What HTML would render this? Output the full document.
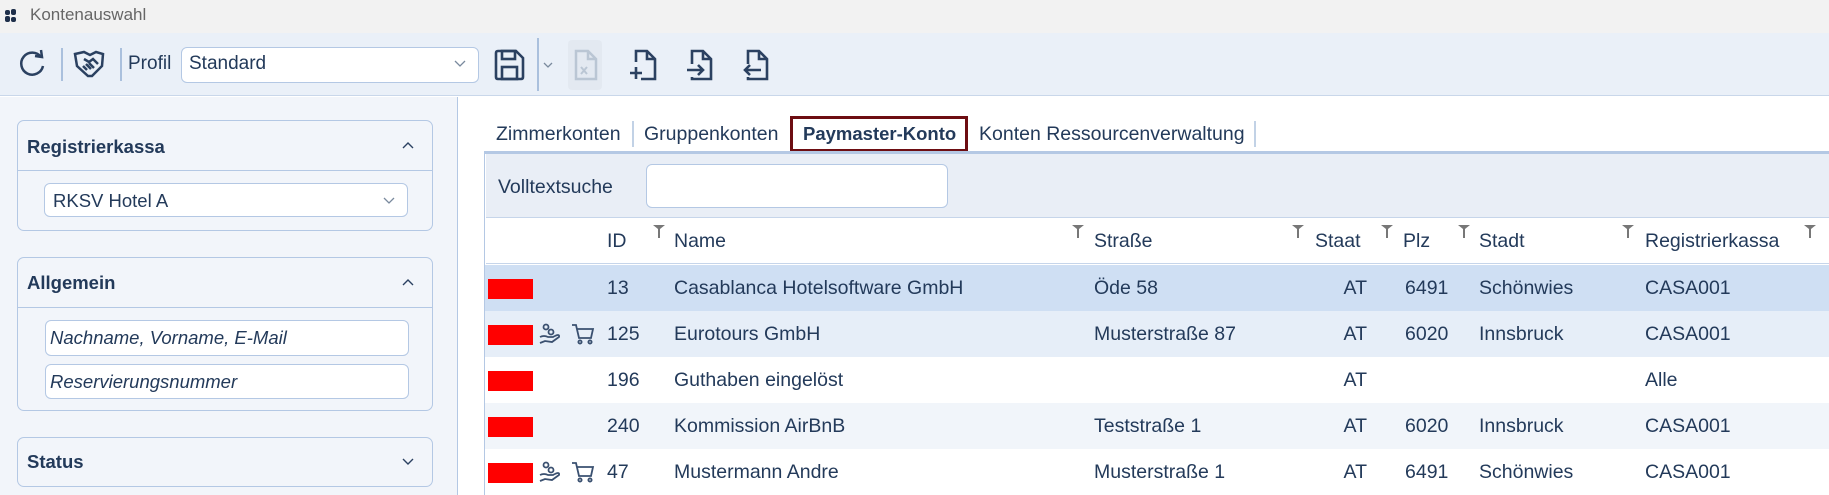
<!DOCTYPE html>
<html><head><meta charset="utf-8"><style>
*{box-sizing:border-box;margin:0;padding:0}
body{width:1829px;height:495px;overflow:hidden;background:#fff;font-family:"Liberation Sans",sans-serif;color:#233a5a;font-size:19.5px;position:relative}
.a{position:absolute;white-space:nowrap}
.card{position:absolute;left:17px;width:416px;border:1.5px solid #b4c8e4;border-radius:7px;background:#f2f5fa}
.inp{position:absolute;background:#fff;border:1.5px solid #b4c8e4;border-radius:6px}
.hd{font-weight:bold;font-size:18.5px}
.row{position:absolute;left:485px;width:1344px;height:46px}
.row .a{top:12px}
.red{position:absolute;left:3px;top:14px;width:45px;height:20px;background:#f00}
.flt{position:absolute;top:6px;width:12px;height:14px}
</style></head><body>
<div class="a" style="left:0;top:0;width:1829px;height:33px;background:#f2f2f2"></div>
<svg class="a" style="left:5px;top:9px" width="12" height="14"><rect x="0" y="1" width="5" height="5" rx="2" fill="#1e2f4a"/><rect x="6" y="0" width="5" height="6" rx="2" fill="#1e2f4a"/><rect x="0" y="7" width="5" height="6" rx="2" fill="#1e2f4a"/><rect x="6" y="8" width="5" height="5" rx="2" fill="#1e2f4a"/></svg>
<div class="a" style="left:30px;top:5px;font-size:17px;color:#666">Kontenauswahl</div>
<div class="a" style="left:0;top:33px;width:1829px;height:63px;background:#eaf0f8;border-bottom:1.5px solid #c9d7ea"></div>
<svg class="a" style="left:16px;top:48px" width="32" height="32" fill="none" stroke="#2b4161" stroke-width="2.5"><path d="M25 9 A11 11 0 1 0 27 18"/><path d="M19 8 L26 9 L25 2"/></svg>
<div class="a" style="left:61px;top:48px;width:1.5px;height:33px;background:#aac0dd"></div>
<svg class="a" style="left:72px;top:48px" width="34" height="32" fill="none" stroke="#2b4161" stroke-width="2.5"><path d="M3 6 L12 4 L18 7 L24 4 L31 6 L30 18 L20 28 L16 28 L5 18 Z"/><path d="M12 11 L17 14 L21 11 L26 16"/><path d="M11 18 L15 22 M14 16 L19 21 M17 15 L22 20"/></svg>
<div class="a" style="left:120px;top:48px;width:1.5px;height:33px;background:#aac0dd"></div>
<div class="a" style="left:128px;top:53px;font-size:19px">Profil</div>
<div class="inp" style="left:181px;top:47px;width:298px;height:36px"></div>
<div class="a" style="left:189px;top:53px;font-size:19px">Standard</div>
<svg class="a" style="left:454px;top:60px" width="12" height="8" fill="none" stroke="#7a8a9e" stroke-width="1.3"><path d="M1 1 L6 6 L11 1"/></svg>
<svg class="a" style="left:492px;top:48px" width="34" height="34" fill="none" stroke="#2b4161" stroke-width="2.6"><path d="M4 5 Q4 3 6 3 L24 3 L31 10 L31 29 Q31 31 29 31 L6 31 Q4 31 4 29 Z"/><rect x="10" y="3" width="13" height="8"/><rect x="10" y="19" width="15" height="12"/></svg>
<div class="a" style="left:537px;top:38px;width:1.5px;height:53px;background:#aac0dd"></div>
<svg class="a" style="left:543px;top:62px" width="10" height="7" fill="none" stroke="#7a8a9e" stroke-width="1.3"><path d="M1 1 L5 5 L9 1"/></svg>
<div class="a" style="left:568px;top:40px;width:34px;height:50px;background:#e3e9f1;border-radius:4px"></div>
<svg class="a" style="left:572px;top:48px" width="28" height="34" fill="none" stroke="#bac6d4" stroke-width="2.5"><path d="M4 3 L16 3 L24 11 L24 31 L4 31 Z M16 3 L16 11 L24 11"/><path d="M9 19 L15 26 M15 19 L9 26" stroke-width="2"/></svg>
<svg class="a" style="left:630px;top:48px" width="30" height="34" fill="none" stroke="#2b4161" stroke-width="2.6"><path d="M6 14 L6 3 L17 3 L25 11 L25 31 L11 31 M17 3 L17 11 L25 11"/><path d="M6 19 L6 31 M0 25 L12 25"/></svg>
<svg class="a" style="left:686px;top:48px" width="30" height="34" fill="none" stroke="#2b4161" stroke-width="2.6"><path d="M6 16 L6 3 L17 3 L25 11 L25 31 L6 31 L6 29 M17 3 L17 11 L25 11"/><path d="M1 22 L17 22 M12 17 L17 22 L12 27"/></svg>
<svg class="a" style="left:742px;top:48px" width="30" height="34" fill="none" stroke="#2b4161" stroke-width="2.6"><path d="M6 16 L6 3 L17 3 L25 11 L25 31 L6 31 L6 29 M17 3 L17 11 L25 11"/><path d="M3 22 L19 22 M8 17 L3 22 L8 27"/></svg>
<div class="a" style="left:0;top:97px;width:458px;height:398px;background:#f2f5fa;border-right:1.5px solid #b4c8e4"></div>
<div class="card" style="top:120px;height:111px"><div style="height:50px;border-bottom:1.5px solid #b4c8e4"></div></div>
<div class="a hd" style="left:27px;top:136px">Registrierkassa</div>
<svg class="a" style="left:402px;top:141px" width="12" height="8" fill="none" stroke="#2b4161" stroke-width="1.4"><path d="M1 7 L6 2 L11 7"/></svg>
<div class="inp" style="left:44px;top:183px;width:364px;height:34px"></div>
<div class="a" style="left:53px;top:190px;font-size:18.5px">RKSV Hotel A</div>
<svg class="a" style="left:383px;top:197px" width="12" height="8" fill="none" stroke="#7a8a9e" stroke-width="1.3"><path d="M1 1 L6 6 L11 1"/></svg>
<div class="card" style="top:257px;height:154px"><div style="height:50px;border-bottom:1.5px solid #b4c8e4"></div></div>
<div class="a hd" style="left:27px;top:272px">Allgemein</div>
<svg class="a" style="left:402px;top:278px" width="12" height="8" fill="none" stroke="#2b4161" stroke-width="1.4"><path d="M1 7 L6 2 L11 7"/></svg>
<div class="inp" style="left:45px;top:320px;width:364px;height:36px"></div>
<div class="a" style="left:50px;top:327px;font-size:18.5px;font-style:italic">Nachname, Vorname, E-Mail</div>
<div class="inp" style="left:45px;top:364px;width:364px;height:35px"></div>
<div class="a" style="left:50px;top:371px;font-size:18.5px;font-style:italic">Reservierungsnummer</div>
<div class="card" style="top:437px;height:50px"></div>
<div class="a hd" style="left:27px;top:451px">Status</div>
<svg class="a" style="left:402px;top:458px" width="12" height="8" fill="none" stroke="#2b4161" stroke-width="1.4"><path d="M1 1 L6 6 L11 1"/></svg>
<div class="a" style="left:496px;top:123px">Zimmerkonten</div>
<div class="a" style="left:632px;top:121px;width:1.5px;height:26px;background:#c2d2e6"></div>
<div class="a" style="left:644px;top:123px">Gruppenkonten</div>
<div class="a" style="left:790px;top:116px;width:178px;height:36px;border:3px solid #6d0d12"></div>
<div class="a" style="left:803px;top:123px;font-weight:bold;font-size:18.5px">Paymaster-Konto</div>
<div class="a" style="left:979px;top:123px">Konten Ressourcenverwaltung</div>
<div class="a" style="left:1254px;top:121px;width:1.5px;height:26px;background:#c2d2e6"></div>
<div class="a" style="left:484px;top:151px;width:1345px;height:344px;border-left:1.5px solid #b4c8e4;border-top:3px solid #b4c8e4"></div>
<div class="a" style="left:486px;top:154px;width:1343px;height:64px;background:#e9eef6;border-bottom:1.5px solid #c6d5ea"></div>
<div class="a" style="left:498px;top:176px">Volltextsuche</div>
<div class="inp" style="left:646px;top:164px;width:302px;height:44px"></div>
<div class="a" style="left:486px;top:219px;width:1343px;height:45px;background:#fff;border-bottom:1.5px solid #c6d5ea"></div>
<div class="a" style="left:607px;top:230px">ID</div>
<div class="a" style="left:674px;top:230px">Name</div>
<div class="a" style="left:1094px;top:230px">Straße</div>
<div class="a" style="left:1315px;top:230px">Staat</div>
<div class="a" style="left:1403px;top:230px">Plz</div>
<div class="a" style="left:1479px;top:230px">Stadt</div>
<div class="a" style="left:1645px;top:230px">Registrierkassa</div>
<svg width="0" height="0" style="position:absolute"><defs><symbol id="f" viewBox="0 0 12 14"><path d="M0 0 H12 L7 4 V13 H5 V4 Z" fill="#777"/></symbol></defs></svg>
<svg class="a flt" style="left:653px;top:225px"><use href="#f"/></svg>
<svg class="a flt" style="left:1072px;top:225px"><use href="#f"/></svg>
<svg class="a flt" style="left:1292px;top:225px"><use href="#f"/></svg>
<svg class="a flt" style="left:1381px;top:225px"><use href="#f"/></svg>
<svg class="a flt" style="left:1458px;top:225px"><use href="#f"/></svg>
<svg class="a flt" style="left:1622px;top:225px"><use href="#f"/></svg>
<svg class="a flt" style="left:1804px;top:225px"><use href="#f"/></svg>
<div class="row" style="top:265px;background:#cfdff3"><div class="red"></div><div class="a" style="left:122px">13</div><div class="a" style="left:189px">Casablanca Hotelsoftware GmbH</div><div class="a" style="left:609px">Öde 58</div><div class="a" style="left:852px;width:30px;text-align:right">AT</div><div class="a" style="left:920px">6491</div><div class="a" style="left:994px">Schönwies</div><div class="a" style="left:1160px">CASA001</div></div>
<div class="row" style="top:311px;background:#e6eef8"><div class="red"></div><svg class="a" style="left:53px;top:12px" width="24" height="22" fill="none" stroke="#3a5070" stroke-width="1.8"><circle cx="8" cy="4" r="2.5"/><circle cx="13" cy="9" r="2.5"/><path d="M2 14 Q6 12 10 14 L15 14 Q22 10 21 14 L14 19 L7 18 L2 20"/></svg><svg class="a" style="left:86px;top:12px" width="24" height="22" fill="none" stroke="#3a5070" stroke-width="1.8"><path d="M1 2 L5 2 L8 15 L20 15 L22 6 L6 6"/><circle cx="9" cy="19" r="1.6"/><circle cx="19" cy="19" r="1.6"/></svg><div class="a" style="left:122px">125</div><div class="a" style="left:189px">Eurotours GmbH</div><div class="a" style="left:609px">Musterstraße 87</div><div class="a" style="left:852px;width:30px;text-align:right">AT</div><div class="a" style="left:920px">6020</div><div class="a" style="left:994px">Innsbruck</div><div class="a" style="left:1160px">CASA001</div></div>
<div class="row" style="top:357px;background:#fff"><div class="red"></div><div class="a" style="left:122px">196</div><div class="a" style="left:189px">Guthaben eingelöst</div><div class="a" style="left:852px;width:30px;text-align:right">AT</div><div class="a" style="left:1160px">Alle</div></div>
<div class="row" style="top:403px;background:#f1f5fa"><div class="red"></div><div class="a" style="left:122px">240</div><div class="a" style="left:189px">Kommission AirBnB</div><div class="a" style="left:609px">Teststraße 1</div><div class="a" style="left:852px;width:30px;text-align:right">AT</div><div class="a" style="left:920px">6020</div><div class="a" style="left:994px">Innsbruck</div><div class="a" style="left:1160px">CASA001</div></div>
<div class="row" style="top:449px;background:#fff"><div class="red"></div><svg class="a" style="left:53px;top:12px" width="24" height="22" fill="none" stroke="#3a5070" stroke-width="1.8"><circle cx="8" cy="4" r="2.5"/><circle cx="13" cy="9" r="2.5"/><path d="M2 14 Q6 12 10 14 L15 14 Q22 10 21 14 L14 19 L7 18 L2 20"/></svg><svg class="a" style="left:86px;top:12px" width="24" height="22" fill="none" stroke="#3a5070" stroke-width="1.8"><path d="M1 2 L5 2 L8 15 L20 15 L22 6 L6 6"/><circle cx="9" cy="19" r="1.6"/><circle cx="19" cy="19" r="1.6"/></svg><div class="a" style="left:122px">47</div><div class="a" style="left:189px">Mustermann Andre</div><div class="a" style="left:609px">Musterstraße 1</div><div class="a" style="left:852px;width:30px;text-align:right">AT</div><div class="a" style="left:920px">6491</div><div class="a" style="left:994px">Schönwies</div><div class="a" style="left:1160px">CASA001</div></div>
</body></html>
